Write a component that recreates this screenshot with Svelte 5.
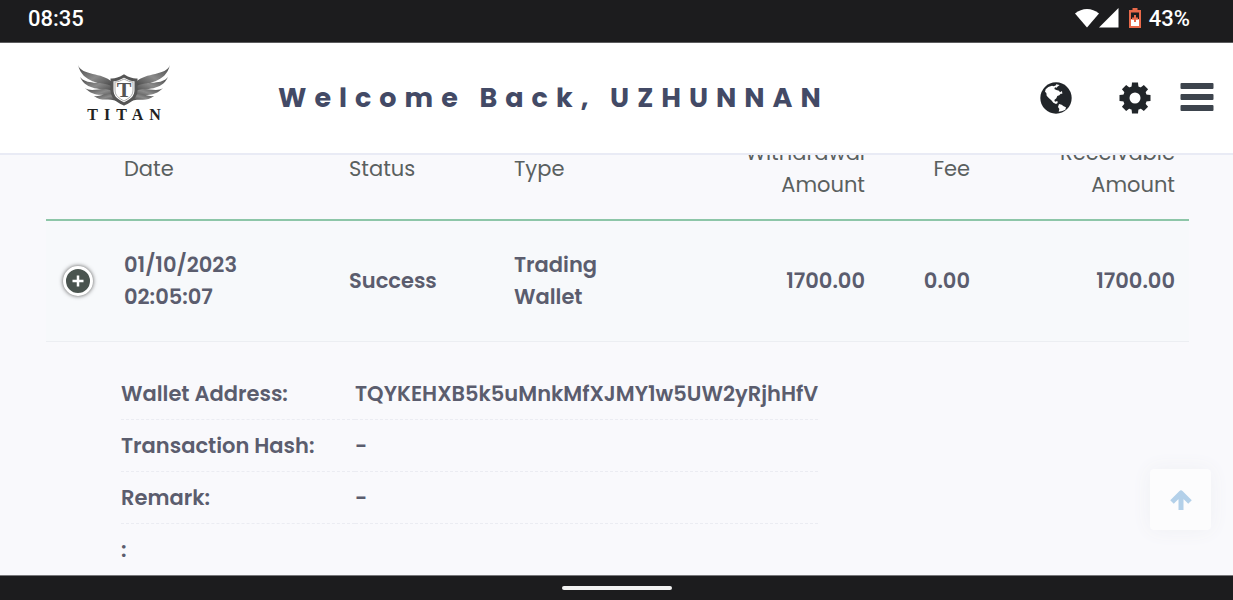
<script lang="ts">
  const columns = [
    { label: 'Date', width: 225 },
    { label: 'Status', width: 165 },
    { label: 'Type', width: 231 },
    { label: 'Withdrawal Amount', width: 148, numeric: true },
    { label: 'Fee', width: 105, numeric: true },
    { label: 'Receivable Amount', width: 205, numeric: true },
  ];

  const row = {
    date: '01/10/2023 02:05:07',
    status: 'Success',
    type: 'Trading Wallet',
    amount: '1700.00',
    fee: '0.00',
    receivable: '1700.00',
  };

  const details = [
    { label: 'Wallet Address:', value: 'TQYKEHXB5k5uMnkMfXJMY1w5UW2yRjhHfV' },
    { label: 'Transaction Hash:', value: '-' },
    { label: 'Remark:', value: '-' },
    { label: ':', value: '' },
  ];

  const teeth = [0, 45, 90, 135, 180, 225, 270, 315];
</script>

<div class="screen">
  <div class="status-bar">
    <span>08:35</span>
    <div class="indicators">
      <svg class="wifi" width="24" height="20" viewBox="0 0 24 20" aria-hidden="true">
        <path d="M0 5.500Q5.500 1 12 1T24 5.500L12 19.500Z" />
      </svg>
      <svg class="signal" width="20" height="20" viewBox="0 0 20 20" aria-hidden="true">
        <path d="M19.500 0V19.500H0Z" />
      </svg>
      <svg class="battery" width="12" height="20" viewBox="0 0 12 20" aria-hidden="true">
        <path fill="#e8694a" d="M3.500 0H8.500V2H12V20H0V2H3.500Z" />
        <path fill="#1c1c1e" d="M2 4.500H10V11H2Z" />
        <path fill="#fff" d="M2 11.500H10V18H2Z" />
        <path fill="#e8694a" d="M5 7H7V9.500H9V11.500H7V14H5V11.500H3V9.500H5Z" />
      </svg>
      <span>43%</span>
    </div>
  </div>

  <header>
    <a class="logo" href="/" aria-label="Titan home">
      <svg width="92" height="42" viewBox="0 0 92 42" aria-hidden="true">
        <defs>
          <linearGradient id="steel" x1="0" y1="0" x2="1" y2="1">
            <stop offset="0" stop-color="#484848" />
            <stop offset="0.5" stop-color="#8a8a8a" />
            <stop offset="1" stop-color="#3c3c3c" />
          </linearGradient>
        </defs>
        <g id="wing" fill="url(#steel)">
          <path d="M0 0C4 11 24 7 34 17L35 24C22 16 5 19 0 0Z" />
          <path d="M2 12C8 20 22 16 34 21L35 29C23 21 9 27 2 12Z" />
          <path d="M7 23C14 28 25 21 34 26L37 33C28 27 17 34 7 23Z" />
          <path d="M16 31C23 32 28 27 36 30L39 36C31 33 23 37 16 31Z" />
        </g>
        <use href="#wing" transform="translate(92 0) scale(-1 1)" />
        <path
          fill="#fff"
          stroke="#555"
          stroke-width="3"
          d="M46 11C41 14 38 15 34 15V25C34 33 40 36 46 39C52 36 58 33 58 25V15C54 15 51 14 46 11Z"
        />
        <path
          fill="none"
          stroke="#aaa"
          d="M46 14C42 16 40 17 37 17V25C37 31 41 33 46 36C51 33 55 31 55 25V17C52 17 50 16 46 14Z"
        />
        <text class="crest" x="46" y="32" text-anchor="middle">T</text>
      </svg>
      <span class="brand">TITAN</span>
    </a>

    <h1>Welcome Back, UZHUNNAN</h1>

    <nav>
      <button aria-label="Language">
        <svg width="32" height="32" viewBox="0 0 96 96" aria-hidden="true">
          <circle cx="48" cy="48" r="47" fill="#212529" />
          <path
            fill="#fff"
            d="M17 22L25 15L36 11L41 13L48 10L54 12L50 17L45 16L43 21L49 24L57 26L60 31L66 27L67 35L62 35L58 40L52 42L49 49L43 54L45 59L52 57L53 63L48 66L40 62L34 55L27 49L20 41L19 33L15 29Z"
          />
          <path fill="#fff" d="M57 66L65 68L71 73L78 76L76 83L67 87L56 89L58 81L54 75Z" />
          <path fill="#fff" d="M48 7L59 9L54 13L48 11Z" />
        </svg>
      </button>
      <button aria-label="Settings">
        <svg width="32" height="32" viewBox="0 0 32 32" fill="#212529" aria-hidden="true">
          {#each teeth as angle}
            <path d="M12.500 5.500L13 0.500H19L19.500 5.500Z" transform="rotate({angle} 16 16)" />
          {/each}
          <circle cx="16" cy="16" r="12" />
          <circle cx="16" cy="16" r="5.500" fill="#fff" />
        </svg>
      </button>
      <button class="menu" aria-label="Menu">
        <svg width="34" height="28" viewBox="0 0 34 28" fill="#3d444d" aria-hidden="true">
          <rect x="0.500" width="33" height="6" rx="1" />
          <rect x="0.500" y="11" width="33" height="6" rx="1" />
          <rect x="0.500" y="22" width="33" height="6" rx="1" />
        </svg>
      </button>
    </nav>
  </header>

  <main>
    <table class="withdrawals">
      <colgroup>
        <col style="width: 64px" />
        {#each columns as column}
          <col style="width: {column.width}px" />
        {/each}
      </colgroup>
      <thead>
        <tr>
          <th aria-label="Details"></th>
          {#each columns as column}
            <th class:numeric={column.numeric}>{column.label}</th>
          {/each}
        </tr>
      </thead>
      <tbody>
        <tr>
          <td class="toggle">
            <button aria-label="Toggle details">
              <svg width="12" height="12" viewBox="0 0 12 12" aria-hidden="true">
                <path stroke="#fff" stroke-width="2.500" d="M6 0.500V11.500M0.500 6H11.500" />
              </svg>
            </button>
          </td>
          <td>{row.date}</td>
          <td>{row.status}</td>
          <td class="type">{row.type}</td>
          <td class="numeric">{row.amount}</td>
          <td class="numeric">{row.fee}</td>
          <td class="numeric">{row.receivable}</td>
        </tr>
      </tbody>
    </table>

    <table class="details">
      <tbody>
        {#each details as detail}
          <tr>
            <th scope="row">{detail.label}</th>
            <td>{detail.value}</td>
          </tr>
        {/each}
      </tbody>
    </table>

    <button class="to-top" aria-label="Scroll to top">
      <svg width="22" height="22" viewBox="0 0 22 22" aria-hidden="true">
        <path
          fill="none"
          stroke="#b3d0e9"
          stroke-width="5"
          stroke-linejoin="round"
          d="M11 21V4M2 13L11 4L20 13"
        />
      </svg>
    </button>
  </main>

  <div class="gesture-bar"><span></span></div>
</div>

<style>
  :global(body) {
    margin: 0;
    font-family: Poppins, Inter, sans-serif;
    color: #5b5d6e;
  }
  button {
    display: flex;
    align-items: center;
    justify-content: center;
    background: none;
    border: none;
    margin: 0;
    padding: 0;
    cursor: pointer;
  }
  svg {
    display: block;
  }
  table {
    border-collapse: separate;
    border-spacing: 0;
    font-size: 21px;
    line-height: 32px;
  }

  .screen {
    display: flex;
    flex-direction: column;
    height: 100vh;
    background: #f9f9fc;
  }

  .status-bar {
    display: flex;
    flex: none;
    align-items: center;
    justify-content: space-between;
    box-sizing: border-box;
    height: 43px;
    padding: 0 43px 6px 28px;
    border-bottom: 1px solid #5c5c5e;
    background: #1c1c1e;
    color: #fff;
    font-family: Roboto, sans-serif;
    font-size: 22px;
    font-weight: 500;
  }

  .indicators {
    display: flex;
    align-items: center;
    fill: #fff;

    .battery {
      margin: 0 8px 0 10px;
    }
  }

  header {
    display: flex;
    flex: none;
    align-items: center;
    box-sizing: border-box;
    height: 112px;
    padding: 0 19px 0 78px;
    border-bottom: 2px solid #e9ebf5;
    background: #fff;
  }

  .logo {
    display: flex;
    flex-direction: column;
    align-items: center;
    width: 92px;
    margin-top: -8px;
    color: #222;
    text-decoration: none;
    font-family: 'Liberation Serif', serif;
  }

  .crest {
    fill: #555;
    font-size: 22px;
    font-weight: bold;
  }

  .brand {
    padding-left: 6px;
    font-size: 16px;
    font-weight: 700;
    line-height: 16px;
    letter-spacing: 6px;
  }

  h1 {
    margin: 0 0 0 108px;
    color: #434a66;
    font-size: 27px;
    font-weight: 700;
    line-height: 36px;
    letter-spacing: 8px;
    white-space: nowrap;
  }

  nav {
    display: flex;
    align-items: center;
    gap: 47px;
    margin-left: auto;

    .menu {
      margin-left: -18px;
      margin-bottom: 2px;
    }
  }

  main {
    position: relative;
    flex: 1;
    min-height: 0;
    overflow: hidden;
    padding: 0 44px 0 46px;
  }

  .withdrawals {
    width: 100%;
    /* scrolled part way under the header */
    margin-top: -36px;
    table-layout: fixed;

    th,
    td {
      padding: 18px 14px;
      text-align: left;
    }

    th {
      border-bottom: 2px solid #8dc6a8;
      color: #5a605f;
      font-weight: 400;
    }

    td {
      height: 84px;
      border-bottom: 1px solid #eceef2;
      background: #f7f9fb;
      font-weight: 600;
    }

    .numeric {
      text-align: right;
    }

    .type {
      padding-right: 110px;
    }

    .toggle button {
      box-sizing: border-box;
      width: 30px;
      height: 30px;
      margin-left: 3px;
      border: 3px solid #fff;
      border-radius: 50%;
      background: #4a544f;
      box-shadow: 0 0 4px #555;
    }
  }

  .details {
    margin: 26px 0 0 75px;

    th,
    td {
      height: 32px;
      padding: 10px 0 9px;
      border-bottom: 1px dashed #ebecf2;
      text-align: left;
      font-weight: 600;
    }

    th {
      width: 234px;
    }

    tr:last-child > * {
      border-bottom: none;
    }
  }

  .to-top {
    position: absolute;
    right: 22px;
    bottom: 45px;
    width: 61px;
    height: 61px;
    border-radius: 4px;
    background: #fcfcfd;
    box-shadow: 0 0 20px #eff0f4;
  }

  .gesture-bar {
    display: flex;
    flex: none;
    align-items: center;
    justify-content: center;
    box-sizing: border-box;
    height: 25px;
    border-top: 1px solid #77777a;
    background: #1c1c1e;

    span {
      width: 110px;
      height: 4px;
      border-radius: 2px;
      background: #f2f2f2;
    }
  }
</style>
